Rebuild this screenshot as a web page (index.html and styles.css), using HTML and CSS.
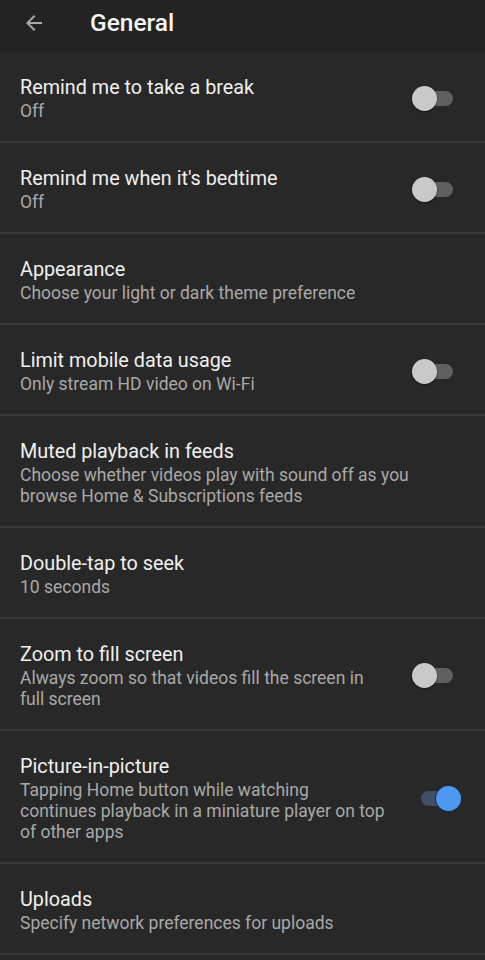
FILE: index.html
```html
<!DOCTYPE html>
<html lang="en">

<head>
  <meta charset="UTF-8">
  <meta name="viewport" content="width=device-width, initial-scale=1.0">
  <title>General</title>
  <link rel="stylesheet" href="styles.css">
</head>

<body>
  <div class="header">
    <svg class="back" width="24" height="24" viewBox="0 0 24 24">
      <path d="M20 11H7.8l5.6-5.6L12 4l-8 8 8 8 1.4-1.4L7.8 13H20z" fill="#a9a9a9"/>
    </svg>
    <h1>General</h1>
  </div>

  <ul class="list">
    <li class="item">
      <div class="text">
        <div class="title">Remind me to take a break</div>
        <div class="sub">Off</div>
      </div>
      <span class="toggle"></span>
    </li>
    <li class="item">
      <div class="text">
        <div class="title">Remind me when it's bedtime</div>
        <div class="sub">Off</div>
      </div>
      <span class="toggle"></span>
    </li>
    <li class="item">
      <div class="text">
        <div class="title">Appearance</div>
        <div class="sub">Choose your light or dark theme preference</div>
      </div>
    </li>
    <li class="item">
      <div class="text">
        <div class="title">Limit mobile data usage</div>
        <div class="sub">Only stream HD video on Wi-Fi</div>
      </div>
      <span class="toggle"></span>
    </li>
    <li class="item">
      <div class="text">
        <div class="title">Muted playback in feeds</div>
        <div class="sub">Choose whether videos play with sound off as you<br>browse Home &amp; Subscriptions feeds</div>
      </div>
    </li>
    <li class="item">
      <div class="text">
        <div class="title">Double-tap to seek</div>
        <div class="sub">10 seconds</div>
      </div>
    </li>
    <li class="item">
      <div class="text">
        <div class="title">Zoom to fill screen</div>
        <div class="sub">Always zoom so that videos fill the screen in<br>full screen</div>
      </div>
      <span class="toggle"></span>
    </li>
    <li class="item">
      <div class="text">
        <div class="title">Picture-in-picture</div>
        <div class="sub">Tapping Home button while watching<br>continues playback in a miniature player on top<br>of other apps</div>
      </div>
      <span class="toggle on"></span>
    </li>
    <li class="item">
      <div class="text">
        <div class="title">Uploads</div>
        <div class="sub">Specify network preferences for uploads</div>
      </div>
    </li>
  </ul>
</body>

</html>
```

FILE: styles.css
```css
* {
  margin: 0;
  padding: 0;
  box-sizing: border-box;
}

body {
  background: #282828;
  font-family: Roboto, "Liberation Sans", sans-serif;
  color: #efefef;
  height: 960px;
  overflow: hidden;
}

.header {
  height: 52px;
  background: #232323;
  display: flex;
  align-items: center;
  padding: 0 0 7px 22px;
}

.header h1 {
  font-size: 24.5px;
  font-weight: 500;
  margin-left: 44px;
  color: #f4f4f4;
}

.list {
  list-style: none;
}

.item {
  display: flex;
  align-items: center;
  padding: 22px 25px 19px 20px;
  border-bottom: 2px solid #3a3a3a;
}

.text {
  flex: 1;
}

.title {
  font-size: 19.8px;
  line-height: 27px;
  color: #f0f0f0;
}

.sub {
  font-size: 17.5px;
  line-height: 21px;
  color: #a9a9a9;
}

.toggle {
  position: relative;
  width: 48px;
  height: 25px;
  flex: none;
}

.toggle::before {
  content: "";
  position: absolute;
  left: 3px;
  right: 7px;
  top: 5px;
  height: 15px;
  border-radius: 8px;
  background: #606060;
}

.toggle::after {
  content: "";
  position: absolute;
  left: 0;
  top: 0;
  width: 25px;
  height: 25px;
  border-radius: 50%;
  background: #c9c9c9;
  box-shadow: 0 1px 2px rgba(0, 0, 0, .5);
}

.toggle.on::before {
  left: 9px;
  right: 4px;
  background: #3f5068;
}

.toggle.on::after {
  left: auto;
  right: -1px;
  background: #4d98f0;
  box-shadow: 0 0 0 1px #1d2c44;
}
```
